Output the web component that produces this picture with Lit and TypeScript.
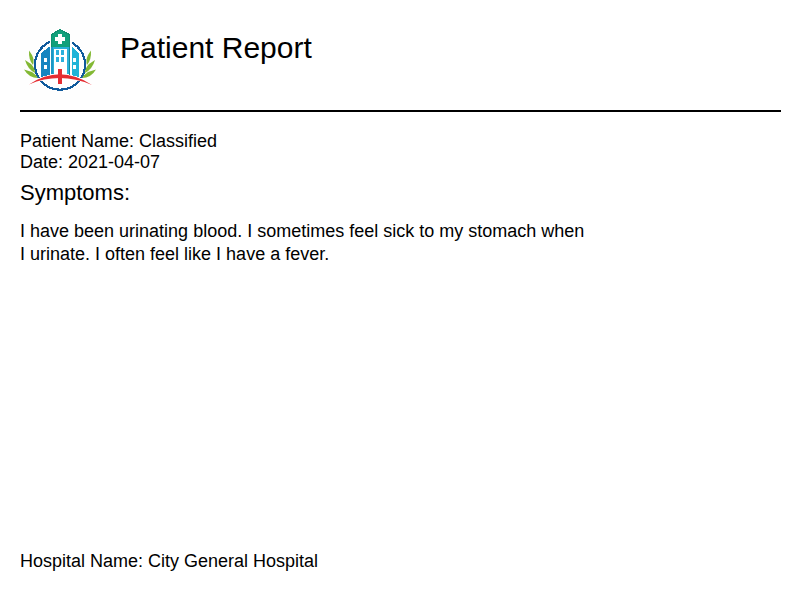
import { LitElement, html, css } from "lit";
import { customElement } from "lit/decorators.js";

@customElement("hospital-logo")
class HospitalLogo extends LitElement {
  static styles = css`
    :host {
      display: block;
      flex: none;
      width: 80px;
      height: 80px;
    }
    svg {
      display: block;
    }
  `;

  render() {
    return html`
      <svg viewBox="0 0 80 80" width="80" height="80" role="img" aria-label="Hospital logo" shape-rendering="crispEdges">
        <rect width="80" height="80" fill="#fefefe" />
        <circle cx="40" cy="44.700" r="25" fill="#fff" stroke="#105a9c" stroke-width="2.200" />
        <path d="M29.500 10H51.500V25H29.500Z" fill="#fefefe" />
        <path d="M21 33 29.500 26.500V57H21Z" fill="#1585c0" />
        <path d="M51.500 26.500 59 33V58H51.500Z" fill="#20b4d8" />
        <path d="M31 27H50V57H31Z" fill="#28b0d8" />
        <path d="M31 27H33V57H31Z" fill="#1c96c4" />
        <path d="M34 29H47V57H34Z" fill="#fff" />
        <path d="M49 27H50V57H49Z" fill="#16879a" />
        <path d="M31 14 40 9 50 14V27H31Z" fill="#10a07a" />
        <path d="M31 14 40 9 50 14V27H49V15L40 10 32 15V27H31Z" fill="#0e9070" />
        <path d="M38 14H42V17H45V21H42V24H38V21H35V17H38Z" fill="#fff" />
        <path d="M36 30h3v5h-3zM41 30h3v5h-3zM36 37h3v5h-3zM41 37h3v5h-3z" fill="#2ab0dc" />
        <path d="M24 38H27V42H24ZM24 45H27V49H24ZM53 38H56V42H53ZM53 45H56V49H53Z" fill="#fff" />
        <g fill="#82b833" shape-rendering="auto">
          <path d="M9 30.500 12 35Q14.500 40 13 45 8.500 40 9 30.500Z" />
          <path d="M5 40 11 44Q15 48 15 53 7.500 49 5 40Z" />
          <path d="M4 49.500 12 52Q16 54.500 18 58 9 58 4 49.500Z" />
          <path d="M71 30.500 68 35Q65.500 40 67 45 71.500 40 71 30.500Z" />
          <path d="M75 40 69 44Q65 48 65 53 72.500 49 75 40Z" />
          <path d="M76 49.500 68 52Q64 54.500 62 58 71 58 76 49.500Z" />
        </g>
        <path d="M9 64.500Q40 44 72 65 40 51 9 64.500Z" fill="#fff" stroke="#fff" stroke-width="1.600" />
        <path d="M9 64.500Q40 44 72 65 40 51.500 9 64.500Z" fill="#e52d32" shape-rendering="auto" />
        <path d="M38 49H42V64H38Z" fill="#e52d32" />
      </svg>
    `;
  }
}

@customElement("app-root")
class AppRoot extends LitElement {
  static styles = css`
    :host {
      display: flex;
      flex-direction: column;
      box-sizing: border-box;
      min-height: 100vh;
      padding: 20px 19px 20px 20px;
      background: #fff;
      color: #000;
      font: 18px/21px "Liberation Sans", Arial, sans-serif;
    }
    header {
      display: flex;
      gap: 20px;
      padding-bottom: 10px;
      border-bottom: 2px solid #000;
    }
    h1,
    h2,
    p {
      margin: 0;
      font-weight: 400;
    }
    h1 {
      padding-top: 11px;
      font-size: 30px;
      line-height: 34px;
    }
    .details {
      padding-top: 19px;
    }
    h2 {
      padding-top: 7px;
      font-size: 22px;
      line-height: 25px;
    }
    .symptoms {
      max-width: 570px;
      padding-top: 15px;
      line-height: 23px;
    }
    footer {
      margin-top: auto;
      padding-bottom: 8px;
    }
  `;

  render() {
    return html`
      <header>
        <hospital-logo></hospital-logo>
        <h1>Patient Report</h1>
      </header>
      <main>
        <div class="details">
          <p>Patient Name: Classified</p>
          <p>Date: 2021-04-07</p>
        </div>
        <h2>Symptoms:</h2>
        <p class="symptoms">
          I have been urinating blood. I sometimes feel sick to my stomach when I urinate. I often feel like I have a
          fever.
        </p>
      </main>
      <footer>Hospital Name: City General Hospital</footer>
    `;
  }
}
